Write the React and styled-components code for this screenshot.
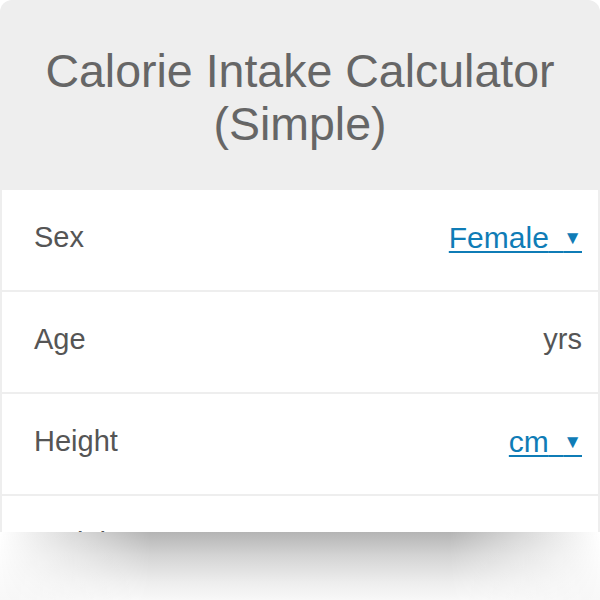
import React from "react"
import styled, { createGlobalStyle } from "styled-components"

const GlobalStyle = createGlobalStyle`
  html, body {
    margin: 0;
    padding: 0;
    background: #fff;
  }
  body {
    font-family: "Liberation Sans", Arial, sans-serif;
  }
`

const Page = styled.div`
  width: 600px;
  height: 600px;
  overflow: hidden;
  display: flex;
  flex-direction: column;
`

const Card = styled.div`
  height: 532px;
  overflow: hidden;
  background: #eeeeee;
  border-radius: 12px 12px 0 0;
  padding: 0 2px;
  box-sizing: border-box;
  flex-shrink: 0;
`

const Header = styled.h1`
  margin: 0;
  padding: 45px 20px 39px;
  font-size: 46.5px;
  line-height: 53px;
  font-weight: 400;
  color: #666;
  text-align: center;
`

const Row = styled.div`
  height: 100px;
  margin-bottom: 2px;
  background: #fff;
  display: flex;
  align-items: center;
  justify-content: space-between;
  padding: 0 16px 5px 32px;
  box-sizing: border-box;
`

const Label = styled.span`
  font-size: 29px;
  color: #555;
`

const Unit = styled.span`
  font-size: 29px;
  color: #555;
`

const Select = styled.a`
  font-size: 30px;
  color: #0f7cb6;
  text-decoration: underline;
  text-decoration-thickness: 2px;
  text-underline-offset: 3px;
  word-spacing: 6px;
  cursor: pointer;
  white-space: pre;
`

const Caret = styled.span`
  font-size: 19px;
  vertical-align: 4px;
`

// soft drop shadow under the clipped card
const Fade = styled.div`
  flex: 1;
  position: relative;
  background: linear-gradient(to bottom, #fff, #f8f8f8);

  &::before {
    content: "";
    position: absolute;
    inset: 0;
    background: linear-gradient(to bottom, #b4b4b4 0%, #d4d4d4 35%, #eeeeee 75%, #f8f8f8 100%);
    -webkit-mask-image: linear-gradient(to right, transparent 0%, #000 25%, #000 75%, transparent 100%);
    mask-image: linear-gradient(to right, transparent 0%, #000 25%, #000 75%, transparent 100%);
  }
`

function Dropdown({ value }) {
  return (
    <Select>
      {value} <Caret>▼</Caret>
    </Select>
  )
}

const fields = [
  { label: "Sex", select: "Female" },
  { label: "Age", unit: "yrs" },
  { label: "Height", select: "cm" },
  { label: "Weight", select: "kg" },
]

export default function App() {
  return (
    <Page>
      <GlobalStyle />
      <Card>
        <Header>
          Calorie Intake Calculator
          <br />
          (Simple)
        </Header>
        {fields.map(f => (
          <Row key={f.label}>
            <Label>{f.label}</Label>
            {f.select ? <Dropdown value={f.select} /> : <Unit>{f.unit}</Unit>}
          </Row>
        ))}
      </Card>
      <Fade />
    </Page>
  )
}
